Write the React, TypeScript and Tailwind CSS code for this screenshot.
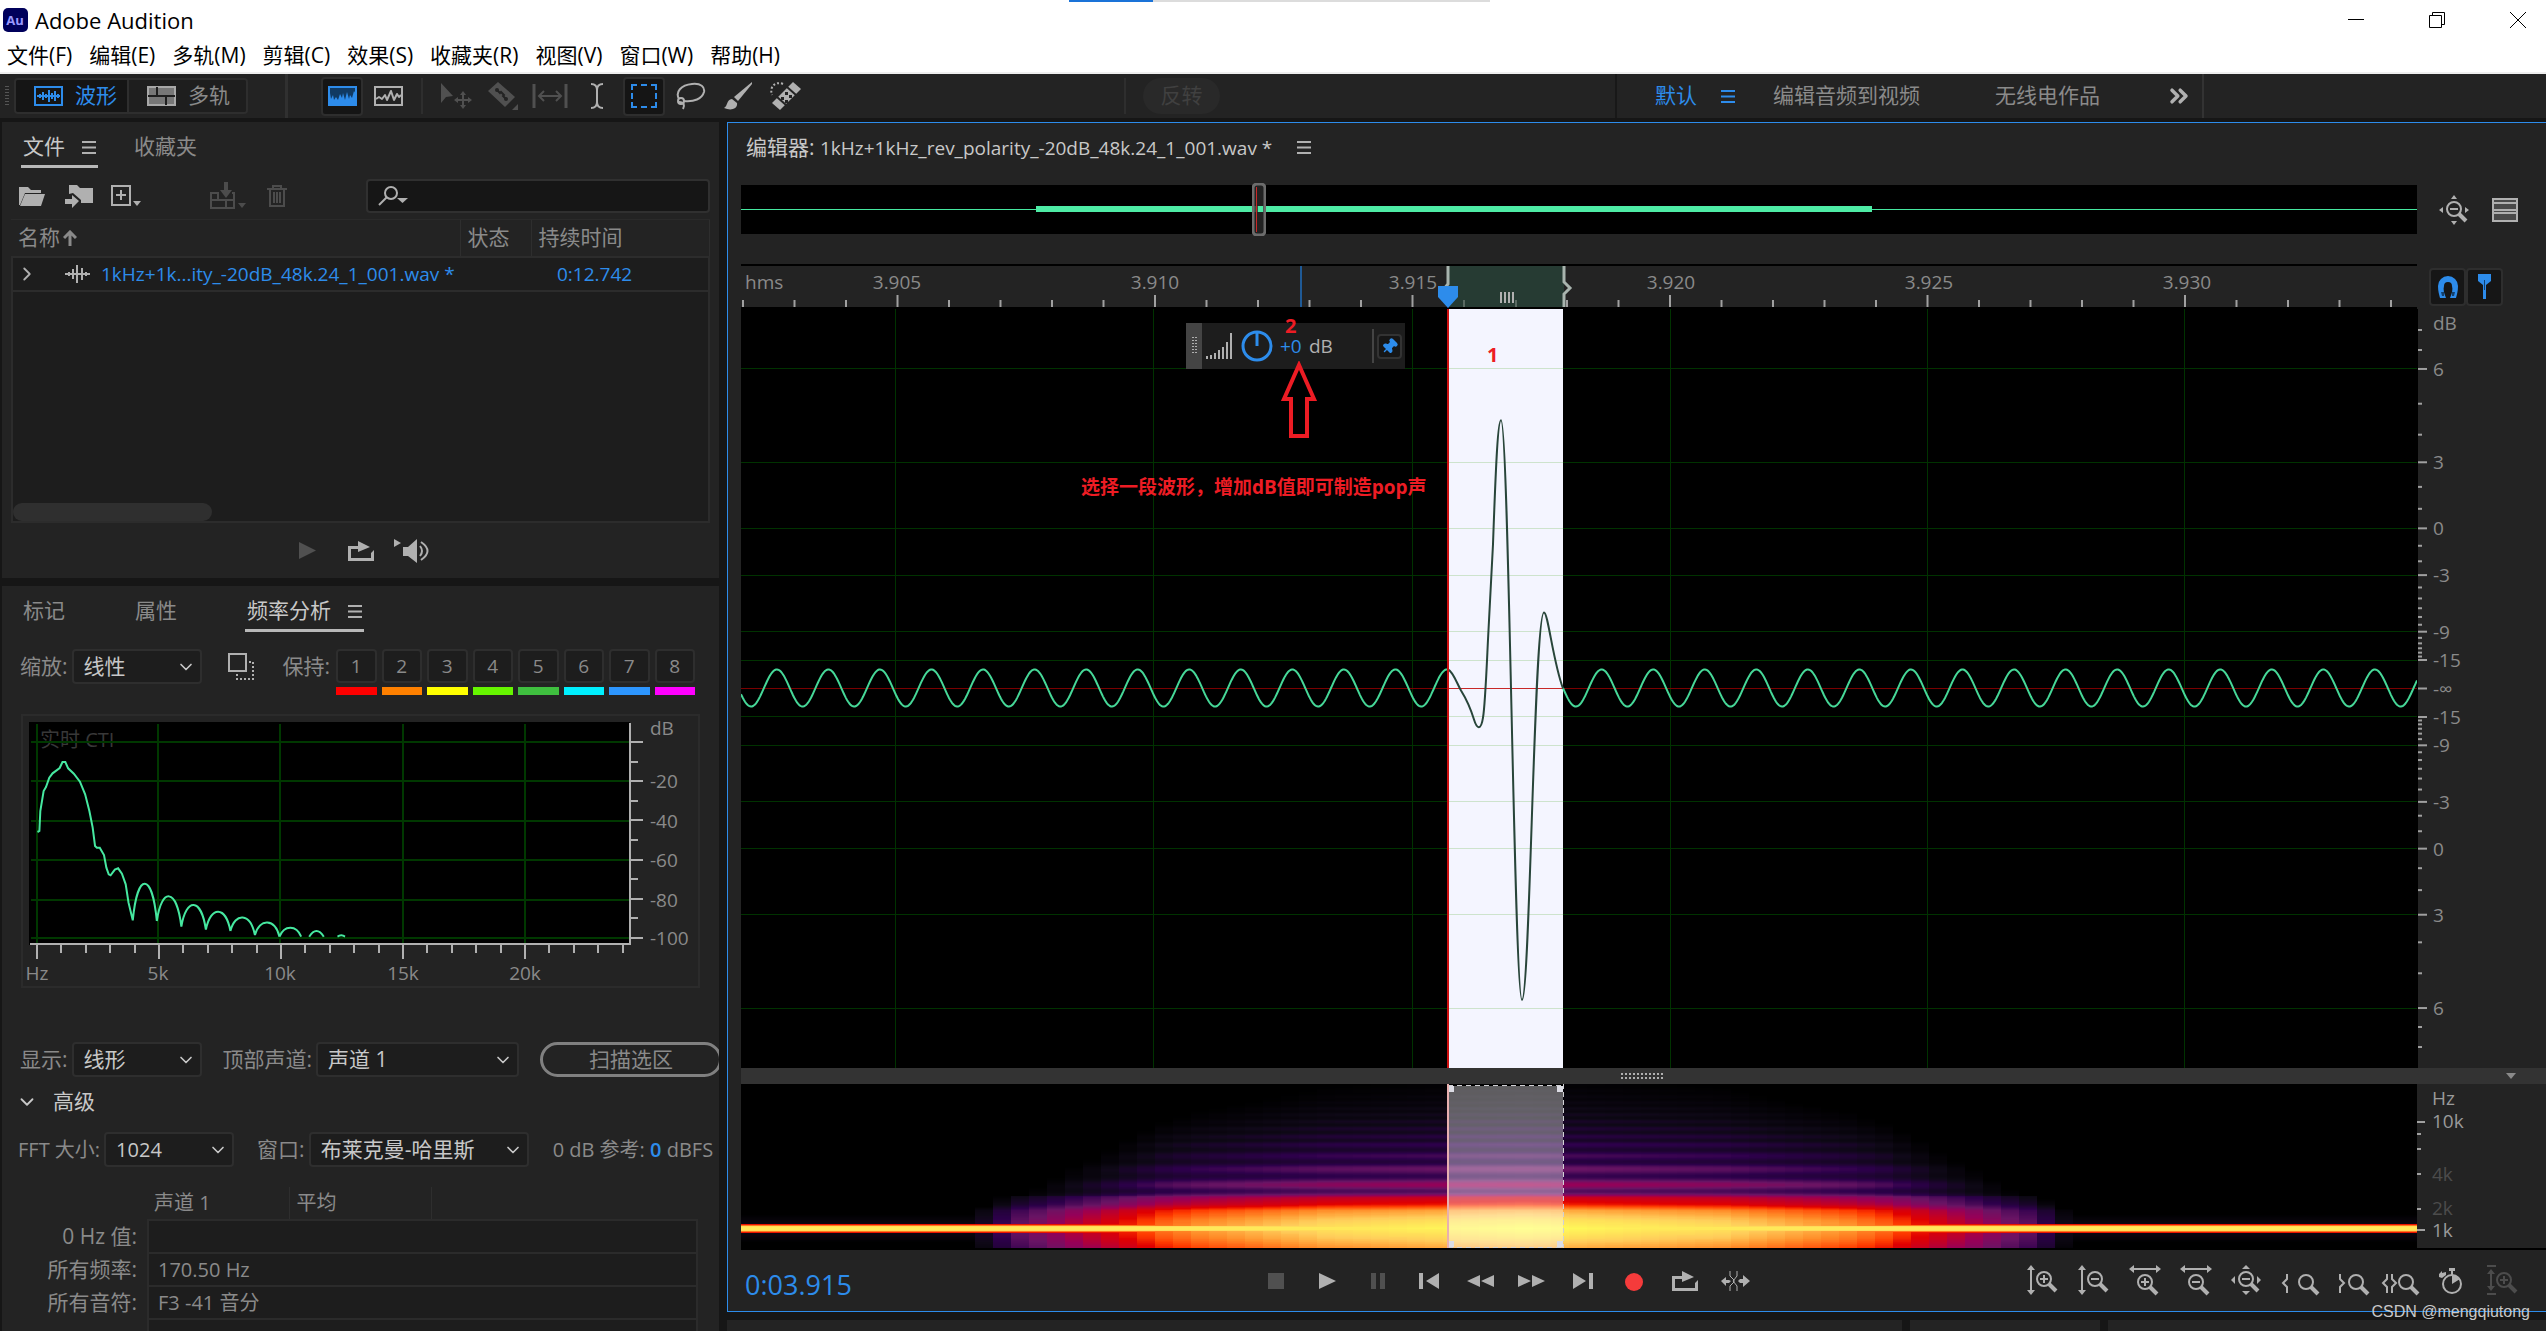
import { useEffect, useRef } from 'react';
import type { ReactNode } from 'react';
import { ChevronDown, ChevronRight, ChevronsRight, Pin } from 'lucide-react';

const WAVE_W = 1676;
const WAVE_H = 758;

// x position inside the editor canvas as a percentage
const px = (x: number) => `${(x / WAVE_W) * 100}%`;

const menus = ['文件(F)', '编辑(E)', '多轨(M)', '剪辑(C)', '效果(S)', '收藏夹(R)', '视图(V)', '窗口(W)', '帮助(H)'];

const holds = [
  { n: 1, color: 'bg-[#ff0000]' },
  { n: 2, color: 'bg-[#ff8000]' },
  { n: 3, color: 'bg-[#ffff00]' },
  { n: 4, color: 'bg-[#66f500]' },
  { n: 5, color: 'bg-[#3fbf3f]' },
  { n: 6, color: 'bg-[#00f0ff]' },
  { n: 7, color: 'bg-[#2d96ff]' },
  { n: 8, color: 'bg-[#ff00ff]' },
];

const times = ['3.905', '3.910', '3.915', '3.920', '3.925', '3.930'];

const majorDb = [6, 3, 0, -3, -9, -15];
const minorDb = [7, 6.5, 5, 4, 2, 1, -1, -2, -4, -5, -6, -7, -8, -10, -11, -12, -13, -14];

// distance from the centre line for a level, in percent of the canvas height
const dbOffset = (db: number) => 21.1 * Math.pow(10, db / 20);

function Lines({ className = 'text-[#b0b0b0]' }: { className?: string }) {
  return (
    <svg width="14" height="13" className={className} stroke="currentColor" strokeWidth="2">
      <path d="M0 1H14M0 6.5H14M0 12H14" />
    </svg>
  );
}

/* ---------- title + menu ---------- */

function TitleBar() {
  return (
    <header className="relative bg-white text-black">
      <div className="absolute top-0 left-[42%] flex h-[2px] w-[421px] bg-[#dcdcdc]">
        <div className="w-[84px] bg-[#1a73d8]" />
      </div>
      <div className="flex h-10 items-center pl-[3px]">
        <svg width="25" height="24" viewBox="0 0 25 24">
          <rect width="25" height="24" rx="5" fill="#00005b" />
          <text x="12" y="17" textAnchor="middle" fontSize="13" fontWeight="700" fill="#9999ff">
            Au
          </text>
        </svg>
        <h1 className="pl-[7px] text-[22px]">Adobe Audition</h1>
        <div className="ml-auto flex gap-[65px] pr-5 text-black">
          <button aria-label="最小化">
            <svg width="16" height="16" stroke="currentColor">
              <path d="M0 7.5H16" />
            </svg>
          </button>
          <button aria-label="还原">
            <svg width="16" height="16" fill="none" stroke="currentColor">
              <path d="M.5 3.5H12.5V15.5H.5ZM3.5 3.5V.5H15.5V12.5H12.5" />
            </svg>
          </button>
          <button aria-label="关闭">
            <svg width="16" height="16" stroke="currentColor">
              <path d="M0 0L16 16M16 0L0 16" />
            </svg>
          </button>
        </div>
      </div>
      <nav className="flex h-[34px] items-center gap-[17px] border-b-2 border-[#eeeeee] pl-[7px] text-[21px]">
        {menus.map((m) => (
          <button key={m}>{m}</button>
        ))}
      </nav>
    </header>
  );
}

/* ---------- toolbar ---------- */

function Tool({ label, active, children }: { label: string; active?: boolean; children: ReactNode }) {
  return (
    <button
      aria-label={label}
      className={
        active
          ? 'flex h-[39px] w-[42px] items-center justify-center rounded border-2 border-[#2e2e2e] bg-[#151515] text-[#2d8ceb]'
          : 'flex h-[39px] w-[42px] items-center justify-center'
      }
    >
      {children}
    </button>
  );
}

function Toolbar() {
  return (
    <div className="flex h-11 items-center bg-[#232323] pl-[5px] text-[#b0b0b0]">
      <svg width="4" height="20" stroke="#555" strokeWidth="4" strokeDasharray="1 2">
        <path d="M2 0V20" />
      </svg>
      <div className="ml-[5px] flex h-9 overflow-hidden rounded border-2 border-[#2e2e2e] text-[21px]">
        <button className="flex w-[113px] items-center gap-3 border-r-2 border-[#2e2e2e] bg-[#151515] pl-[18px] text-[#2d8ceb]">
          <svg width="29" height="20" fill="none" stroke="currentColor" strokeWidth="2">
            <rect x="1" y="1" width="27" height="18" />
            <path d="M3 10H26M6 8V12M9 6V14M12 8V12M15 4V16M18 7V13M21 5V15M24 8V12" />
          </svg>
          波形
        </button>
        <button className="flex w-[117px] items-center gap-3 bg-[#1e1e1e] pl-[18px] text-[#8a8a8a]">
          <svg width="29" height="20">
            <rect width="29" height="20" fill="#a8a8a8" />
            <path d="M2 2H9V9H2ZM2 11H18V18H2ZM11 2H27V9H11ZM20 11H27V18H20Z" fill="#777" />
            <path d="M1 10H28M10 1V10M19 10V19" stroke="#1e1e1e" strokeWidth="2" />
          </svg>
          多轨
        </button>
      </div>
      <div className="ml-[37px] h-11 w-[3px] bg-[#303030]" />

      <div className="ml-[33px] flex items-center gap-1">
        <Tool label="频谱显示" active>
          <svg width="29" height="20">
            <rect width="29" height="20" fill="#103a63" />
            <path
              d="M1 19V9L2 7L3 13L5 9L6 14L8 11L10 14L12 8L14 12L15 7L17 14L19 6L21 13L22 9L24 12L26 5L28 8V19Z"
              fill="#2d8ceb"
            />
            <rect x="1" y="1" width="27" height="18" fill="none" stroke="#2d8ceb" strokeWidth="2" />
          </svg>
        </Tool>
        <Tool label="音高显示">
          <svg width="29" height="20" fill="none" stroke="currentColor" strokeWidth="2">
            <rect x="1" y="1" width="27" height="18" />
            <path d="M2 13L5 11L8 13L11 9L13 14L17 5L20 14L23 8L25 11L27 9" strokeLinejoin="round" />
          </svg>
        </Tool>
      </div>
      <div className="ml-[12px] h-9 w-[2px] bg-[#2e2e2e]" />

      <div className="ml-[12px] flex items-center gap-[5px]">
        <Tool label="移动工具">
          <svg width="32" height="26" className="text-[#505050]" fill="currentColor">
            <path d="M1 0L13 13L6 14L1 20Z" />
            <path d="M23 8L26 12H24V16H28V14L32 17L28 20V18H24V22H26L23 26L20 22H22V18H18V20L14 17L18 14V16H22V12H20Z" />
          </svg>
        </Tool>
        <Tool label="切断所选剪辑工具">
          <svg width="32" height="30" className="text-[#505050]">
            <path d="M1 10L11 1L28 16L18 26Z" fill="currentColor" />
            <path d="M10 9L13 12L14 11L17 14L16 15L19 18" fill="none" stroke="#232323" strokeWidth="2" />
            <circle cx="10" cy="9" r="2" fill="#232323" />
            <circle cx="19" cy="18" r="2" fill="#232323" />
            <path d="M31 23V29H25Z" fill="currentColor" />
          </svg>
        </Tool>
        <Tool label="滑动工具">
          <svg width="36" height="24" className="text-[#505050]" fill="none" stroke="currentColor" strokeWidth="3">
            <path d="M2 0V24M34 0V24" />
            <path d="M8 12H28M12 7L7 12L12 17M24 7L29 12L24 17" strokeWidth="2" />
          </svg>
        </Tool>
      </div>
      <div className="ml-[5px] flex items-center gap-[5px]">
        <Tool label="时间选择工具">
          <svg width="14" height="26" fill="none" stroke="currentColor" strokeWidth="2">
            <path d="M1 1Q7 1 7 7Q7 1 13 1M7 5V21M1 25Q7 25 7 19Q7 25 13 25" />
          </svg>
        </Tool>
        <Tool label="框选工具" active>
          <svg width="26" height="24" fill="none" stroke="currentColor" strokeWidth="2">
            <path d="M1 6V1H6M20 1H25V6M25 18V23H20M6 23H1V18M10 1H16M10 23H16M1 9V15M25 9V15" />
          </svg>
        </Tool>
        <Tool label="套索选择工具">
          <svg width="30" height="28" fill="none" stroke="currentColor" strokeWidth="2">
            <path d="M3 17C-1 10 5 3 16 2C25 1 29 5 28 10C26 17 18 20 8 19" />
            <circle cx="5" cy="19" r="3" />
            <path d="M3 20C8 20 9 23 7 27" />
          </svg>
        </Tool>
        <Tool label="画笔选择工具">
          <svg width="30" height="28" fill="currentColor">
            <path d="M29 0L11 15L15 19L29 2Z" />
            <path d="M9 17C3 18 5 24 1 26C8 29 15 27 14 21Z" />
          </svg>
        </Tool>
        <Tool label="污点修复画笔工具">
          <svg width="32" height="30">
            <path d="M14 3C7 0 0 5 3 14" fill="none" stroke="currentColor" strokeWidth="2" strokeDasharray="2 2" />
            <path d="M24 1L32 8L11 29L3 22Z" fill="currentColor" />
            <path d="M18 6L27 14M8 16L17 24" stroke="#232323" strokeWidth="2" />
            <path d="M16 11h3v3h-3zM20 14h3v3h-3zM12 16h3v3h-3zM16 19h3v3h-3z" fill="#232323" />
          </svg>
        </Tool>
      </div>

      <div className="ml-auto flex h-full items-center">
        <div className="h-9 w-[2px] bg-[#2e2e2e]" />
        <button disabled className="ml-[17px] h-9 w-[77px] rounded-full bg-[#292929] text-[21px] text-[#404040]">
          反转
        </button>
      </div>
      <div className="ml-[395px] flex h-full items-center border-x-2 border-[#181818] border-r-[#333333] pr-[9px] pl-[38px] text-[21px] text-[#8a8a8a]">
        <button className="text-[#2d8ceb]">默认</button>
        <button aria-label="工作区菜单" className="ml-6">
          <Lines className="text-[#2d8ceb]" />
        </button>
        <button className="ml-[38px]">编辑音频到视频</button>
        <button className="ml-[75px]">无线电作品</button>
        <button aria-label="更多" className="ml-[65px] text-[#b0b0b0]">
          <ChevronsRight size={28} strokeWidth={3} />
        </button>
      </div>
      <div className="w-[342px]" />
    </div>
  );
}

/* ---------- files panel ---------- */

function Tab({ label, active }: { label: string; active?: boolean }) {
  return active ? (
    <button className="flex items-center gap-[17px] border-b-[3px] border-[#b8b8b8] px-[2px] pt-[7px] text-[#c8c8c8]">
      {label}
      <Lines />
    </button>
  ) : (
    <button className="border-b-[3px] border-transparent px-[2px] pt-[7px] text-[#8a8a8a]">{label}</button>
  );
}

const PlayIcon = () => (
  <svg width="17" height="17" fill="currentColor">
    <path d="M0 0L17 8.5L0 17Z" />
  </svg>
);

const LoopIcon = () => (
  <svg width="26" height="20" fill="currentColor">
    <path d="M0 5H10V0L22 6L10 11V8H3V17H23V12L26 9V20H0Z" />
  </svg>
);

function FilesPanel() {
  return (
    <section className="bg-[#232323] px-[9px] text-[#8a8a8a]">
      <div className="flex h-[46px] gap-[34px] px-[10px] text-[21px]">
        <Tab label="文件" active />
        <Tab label="收藏夹" />
      </div>
      <div className="mt-[11px] flex h-[34px] items-center pl-2 text-[#b0b0b0]">
        <button aria-label="打开文件">
          <svg width="26" height="20" fill="currentColor">
            <path d="M0 19V1H9L12 4H22V7H6L1 19Z" />
            <path d="M6 8H26L22 20H1Z" />
          </svg>
        </button>
        <button aria-label="导入文件" className="ml-5">
          <svg width="28" height="24" fill="currentColor">
            <path d="M4 10V1H12L15 4H28V19H16V16L8 9Z" />
            <path d="M0 15H7V11L14 17L7 24V20H0Z" />
          </svg>
        </button>
        <button aria-label="新建文件" className="ml-[18px]">
          <svg width="30" height="22" fill="none" stroke="currentColor" strokeWidth="2">
            <path d="M1 1H19V20H1ZM10 5V15M5 10H15" />
            <path d="M22 16H30L26 21Z" fill="currentColor" stroke="none" />
          </svg>
        </button>
        <button aria-label="插入到多轨混音中" disabled className="ml-[69px] text-[#4c4c4c]">
          <svg width="36" height="28" fill="none" stroke="currentColor" strokeWidth="2">
            <path d="M9 11H1V26H24V11H22M1 18H24M8 11V18M16 18V26" />
            <path d="M14 0H18V8H22L16 16L10 8H14Z" fill="currentColor" stroke="none" />
            <path d="M28 21H36L32 26Z" fill="currentColor" stroke="none" />
          </svg>
        </button>
        <button aria-label="删除" disabled className="ml-[21px] text-[#4c4c4c]">
          <svg width="20" height="22" fill="none" stroke="currentColor" strokeWidth="2">
            <path d="M0 4H20M6 4V1H14V4M3 4V21H17V4M7 7V18M10 7V18M13 7V18" />
          </svg>
        </button>
        <label className="ml-auto flex h-[34px] w-[344px] items-center rounded border-2 border-[#303030] bg-[#161616] pl-[10px]">
          <svg width="32" height="20" fill="none" stroke="currentColor" strokeWidth="2">
            <circle cx="13" cy="7" r="6" />
            <path d="M9 11L1 19" />
            <path d="M19 12H30L24.5 17Z" fill="currentColor" stroke="none" />
          </svg>
          <input type="search" aria-label="搜索" className="min-w-0 flex-1 bg-transparent outline-none" />
        </label>
      </div>
      <div className="mt-[6px] border-t border-[#2a2a2a]">
        <table className="w-full table-fixed border-collapse text-left">
          <colgroup>
            <col className="w-[448px]" />
            <col className="w-[71px]" />
            <col />
          </colgroup>
          <thead className="text-[21px]">
            <tr className="h-[37px]">
              <th className="pl-[6px] font-normal">
                <span className="flex items-center gap-[3px]">
                  名称
                  <svg width="14" height="16" fill="none" stroke="currentColor" strokeWidth="3">
                    <path d="M7 16V3M1 8L7 2L13 8" />
                  </svg>
                </span>
              </th>
              <th className="border-l border-[#2e2e2e] pl-[7px] font-normal">状态</th>
              <th className="border-x border-[#2e2e2e] pl-[7px] font-normal">持续时间</th>
            </tr>
          </thead>
          <tbody className="border-2 border-[#2c2c2c] bg-[#1d1d1d] text-[#2d8ceb]">
            <tr className="h-[34px] border-b-2 border-[#2c2c2c]">
              <td className="pl-[3px]">
                <span className="flex items-center">
                  <ChevronRight size={22} className="text-[#b0b0b0]" />
                  <svg width="25" height="18" stroke="#b0b0b0" strokeWidth="2" className="mr-[11px] ml-[27px]">
                    <path d="M0 9H25M4 7V11M8 4V14M12 0V18M17 3V15M21 7V11" />
                  </svg>
                  <span className="text-[19px] whitespace-nowrap">1kHz+1k...ity_-20dB_48k.24_1_001.wav *</span>
                </span>
              </td>
              <td />
              <td className="pl-[26px] text-[19px]">0:12.742</td>
            </tr>
            <tr>
              <td colSpan={3} className="h-[231px] p-0 align-bottom">
                <div className="h-[18px] w-[199px] rounded-full bg-[#2f2f2f]" />
              </td>
            </tr>
          </tbody>
        </table>
      </div>
      <div className="flex h-[55px] items-center justify-center gap-[32px] pl-2 text-[#b0b0b0]">
        <button aria-label="播放" disabled className="text-[#505050]">
          <PlayIcon />
        </button>
        <button aria-label="循环播放">
          <LoopIcon />
        </button>
        <button aria-label="自动播放" className="-ml-[12px]">
          <svg width="37" height="26" fill="currentColor">
            <path d="M0 1L7 5L0 9Z" />
            <path d="M9 9H14L23 1V25L14 18H9Z" />
            <path d="M26 8Q30 13 26 18M27 4Q40 13 27 22" fill="none" stroke="currentColor" strokeWidth="2" />
          </svg>
        </button>
      </div>
    </section>
  );
}

/* ---------- frequency analysis ---------- */

function Select({ label, value, width }: { label: string; value: string; width: string }) {
  return (
    <label className="flex shrink-0 items-center gap-[4px]">
      <span className="whitespace-nowrap">{label}</span>
      <span className={`grid items-center ${width}`}>
        <select className="col-start-1 row-start-1 h-[35px] appearance-none rounded border-2 border-[#2e2e2e] bg-[#1d1d1d] pl-[10px] text-[#c8c8c8]">
          <option>{value}</option>
        </select>
        <ChevronDown size={20} className="pointer-events-none col-start-1 row-start-1 mr-[6px] justify-self-end text-[#c8c8c8]" />
      </span>
    </label>
  );
}

// trough / peak pairs of the side lobes
const lobes = [
  [282, 1018, 303, 908],
  [333, 1020, 358, 944],
  [385, 1037, 410, 971],
  [437, 1046, 463, 992],
  [489, 1050, 515, 1008],
  [541, 1062, 567, 1024],
  [593, 1067, 618, 1040],
  [656, 1067, 672, 1050],
  [716, 1067, 724, 1062],
];
const lobeEnds = [333, 385, 437, 489, 541, 593, 639, 687, 732];

const lobePath = lobes
  .map(([x, y, , peak], i) => {
    const end = lobeEnds[i];
    const endY = i < 6 ? lobes[i + 1][1] : 1067;
    const top = peak - (y - peak) / 3;
    return `M${x} ${y}C${x + 10} ${top} ${end - 10} ${top} ${end} ${endY}`;
  })
  .join('');

function FrequencyChart() {
  const gx = [16, 137, 259, 382, 504];
  const gy = [28, 67, 107, 146, 186, 224];
  return (
    <svg viewBox="0 0 679 274" className="block w-full text-[19px]" role="img" aria-label="频率分析">
      <rect x="1" y="1" width="677" height="272" fill="none" stroke="#2b2b2b" strokeWidth="2" />
      <rect x="8" y="8" width="601" height="223" fill="#000" />
      <text x="19" y="33" fill="#383838" fontSize="20">
        实时 CTI
      </text>
      <g stroke="#003800" strokeWidth="2">
        {gx.map((x) => (
          <path key={x} d={`M${x} 10V231`} />
        ))}
        {gy.map((y) => (
          <path key={y} d={`M10 ${y}H609`} />
        ))}
      </g>
      <svg x="8" y="8" width="600" height="223" viewBox="62 423 1272 669" preserveAspectRatio="none">
        <path
          d={`M80 753L84 750L86 690L93 630L98 618L105 590L112 577L127 561L133 543L139 543L145 562L157 578L170 602L181 640L190 690L197 740L202 795L206 800H212L221 822L226 860L231 880L235 883L244 866L251 862L259 878L267 910L273 965L282 1018${lobePath}`}
          fill="none"
          stroke="#46e8a0"
          strokeWidth="2"
          vectorEffect="non-scaling-stroke"
        />
      </svg>
      <g stroke="#b0b0b0" strokeWidth="2">
        <path d="M609 9V231M9 230H610" />
        {Array.from({ length: 25 }, (_, i) => (
          <path key={i} d={`M${16 + Math.round(i * 24.4)} 231V${i % 5 === 0 ? 245 : 239}`} />
        ))}
        {Array.from({ length: 11 }, (_, i) => (
          <path key={i} d={`M610 ${28 + Math.round(i * 19.6)}H${i % 2 === 0 ? 622 : 617}`} />
        ))}
      </g>
      <g fill="#8a8a8a">
        <text x="629" y="21">
          dB
        </text>
        {['-20', '-40', '-60', '-80', '-100'].map((t, i) => (
          <text key={t} x="629" y={gy[i + 1] + 7}>
            {t}
          </text>
        ))}
        {['Hz', '5k', '10k', '15k', '20k'].map((t, i) => (
          <text key={t} x={gx[i]} y="266" textAnchor="middle">
            {t}
          </text>
        ))}
      </g>
    </svg>
  );
}

function FrequencyPanel() {
  return (
    <section className="min-h-0 flex-1 overflow-hidden bg-[#232323] text-[21px] text-[#8a8a8a]">
      <div className="flex h-[46px] gap-[66px] px-[19px]">
        <Tab label="标记" />
        <Tab label="属性" />
        <Tab label="频率分析" active />
      </div>
      <div className="mt-[17px] flex items-start pl-[18px] whitespace-nowrap">
        <Select label="缩放:" value="线性" width="w-[130px]" />
        <button aria-label="复制到" className="mt-1 ml-[26px]">
          <svg width="26" height="27" fill="none" stroke="#b0b0b0" strokeWidth="2">
            <rect x="1" y="1" width="17" height="17" />
            <path d="M21 9H25V26H9V21" strokeDasharray="2 2" />
          </svg>
        </button>
        <div className="ml-auto flex items-start gap-[6px] pr-[24px]">
          <span className="pt-[2px]">保持:</span>
          <div className="grid w-[359px] grid-cols-8 gap-[5px]">
            {holds.map((h) => (
              <div key={h.n} className="flex flex-col gap-1">
                <button className="h-[34px] rounded border-2 border-[#2e2e2e] bg-[#1d1d1d] text-[19px] leading-none">{h.n}</button>
                <div className={`h-2 ${h.color}`} />
              </div>
            ))}
          </div>
        </div>
      </div>
      <div className="mt-[19px] px-[19px]">
        <FrequencyChart />
      </div>
      <div className="mt-[54px] flex items-center pl-[18px] whitespace-nowrap">
        <Select label="显示:" value="线形" width="w-[130px]" />
        <div className="ml-[21px]">
          <Select label="顶部声道:" value="声道 1" width="w-[203px]" />
        </div>
        <button className="ml-[21px] h-[35px] w-[182px] shrink-0 rounded-full border-[3px] border-[#808080] leading-none">扫描选区</button>
      </div>
      <button className="mt-[9px] flex h-8 items-center gap-[15px] pl-[14px] text-[#c8c8c8]">
        <ChevronDown size={22} />
        高级
      </button>
      <div className="mt-[14px] flex items-center pl-[16px] whitespace-nowrap">
        <div className="text-[20px]">
          <Select label="FFT 大小:" value="1024" width="w-[130px]" />
        </div>
        <div className="ml-[23px]">
          <Select label="窗口:" value="布莱克曼-哈里斯" width="w-[220px]" />
        </div>
        <span className="ml-[24px] text-[20px]">
          0 dB 参考: <span className="font-semibold text-[#2d8ceb]">0</span> dBFS
        </span>
      </div>
      <table className="mt-[20px] w-[696px] table-fixed border-collapse text-left text-[20px]">
        <colgroup>
          <col className="w-[146px]" />
          <col className="w-[141px]" />
          <col className="w-[142px]" />
          <col />
        </colgroup>
        <thead>
          <tr className="h-[33px]">
            <td />
            <th className="pl-[6px] font-normal">声道 1</th>
            <th className="border-x border-[#2e2e2e] pl-[7px] font-normal">平均</th>
            <td />
          </tr>
        </thead>
        <tbody>
          {[
            ['0 Hz 值:', ''],
            ['所有频率:', '170.50 Hz'],
            ['所有音符:', 'F3 -41 音分'],
            ['', ''],
          ].map(([k, v], i) => (
            <tr key={i} className="h-[33px]">
              <th className="p-0 pr-[10px] text-right text-[21px] leading-none font-normal">{k}</th>
              <td colSpan={3} className="border-2 border-[#2b2b2b] bg-[#1d1d1d] p-0 pl-[9px] leading-none">
                {v}
              </td>
            </tr>
          ))}
        </tbody>
      </table>
    </section>
  );
}

/* ---------- editor ---------- */

function Overview() {
  return (
    <div className="flex">
      <svg className="h-[49px] flex-1 overflow-visible bg-black">
        <line x1="0" x2="100%" y1="24" y2="24" stroke="#46e8a0" strokeWidth="1" shapeRendering="crispEdges" />
        <rect x={px(295)} y="21" width={px(836)} height="6" fill="#4eeba5" />
        <svg x={px(511)} y="-2" width="14" height="53">
          <rect x="1" y="1" width="12" height="51" rx="4" fill="#2a2a2a" fillOpacity="0.8" stroke="#6c6c6c" strokeWidth="3" />
          <path d="M6 23H11V29H6Z" fill="#4eeba5" />
          <path d="M4.5 4V49" stroke="#c82828" strokeWidth="1" />
        </svg>
      </svg>
      <div className="flex w-[129px] items-center gap-[23px] pl-[22px] text-[#b0b0b0]">
        <button aria-label="全部缩小">
          <svg width="30" height="30" fill="currentColor">
            <path d="M15 0L18 4H12ZM15 30L18 26H12ZM0 15L4 12V18ZM30 15L26 12V18Z" />
            <Glass cx={15} cy={14} sign="-" />
          </svg>
        </button>
        <button aria-label="显示列表">
          <svg width="26" height="24" fill="none" stroke="currentColor" strokeWidth="2">
            <rect x="1" y="1" width="24" height="22" fill="#4a4a4a" />
            <path d="M1 5H25M1 12H25M1 15H25" />
          </svg>
        </button>
      </div>
    </div>
  );
}

function Ruler() {
  const ticks = Array.from({ length: 33 }, (_, i) => i);
  return (
    <div className="mt-[30px] flex">
      <svg className="h-[45px] flex-1 overflow-visible border-y-2 border-black text-[19px]">
        <text x="4" y="23" fill="#8a8a8a">
          hms
        </text>
        {times.map((t, i) => (
          <text key={t} x={px(156 + i * 258)} y="23" textAnchor="middle" fill="#8a8a8a">
            {t}
          </text>
        ))}
        <g stroke="#a0a0a0" strokeWidth="2">
          {ticks.map((i) => (
            <line key={i} x1={px(2 + i * 51.5)} x2={px(2 + i * 51.5)} y1={i % 5 === 3 ? 29 : 34} y2="41" />
          ))}
        </g>
        <line x1={px(560)} x2={px(560)} y1="0" y2="41" stroke="#1f5a96" strokeWidth="2" />
        <rect x={px(707)} y="0" width={px(116)} height="41" fill="#263b33" />
        <svg x={px(697)} y="0" width="136" height="42" className="overflow-visible">
          <path d="M10 0V18L6 23M126 0V16L132 22L126 28V41" fill="none" stroke="#a8b4ae" strokeWidth="3" />
          <path d="M63 26V37M67 26V37M71 26V37M75 26V37" stroke="#b0b0b0" strokeWidth="2" />
          <path d="M26 34V41M78 34V41" stroke="#5a6a62" strokeWidth="2" />
          <path d="M0 20H20V31L10 42L0 31Z" fill="#2d8ceb" />
        </svg>
      </svg>
      <div className="flex w-[129px] items-center pl-3 text-[#2d8ceb]">
        <button aria-label="对齐" className="flex h-[38px] w-[37px] items-center justify-center rounded border-2 border-[#2e2e2e] bg-[#161616]">
          <svg width="22" height="22">
            <path d="M1 10A10 10 0 0 1 21 10C21 15 20 18 19 22H13C15 17 16 14 15 10A4 4 0 0 0 7 10C6 14 7 17 9 22H3C2 18 1 15 1 10Z" fill="currentColor" />
            <path d="M4 16H7V20H5ZM15 16H18L17 20H15Z" fill="#12406e" />
          </svg>
        </button>
        <button aria-label="播放指示器" className="flex h-[38px] w-[37px] items-center justify-center rounded border-2 border-[#2e2e2e] bg-[#161616]">
          <svg width="13" height="25" fill="currentColor">
            <path d="M0 0H13V7L8 11V25H5V11L0 7Z" />
            <path d="M6.5 6V16" stroke="#12406e" strokeWidth="1" />
          </svg>
        </button>
      </div>
    </div>
  );
}

// 1 kHz tone, one cycle per millisecond
function tone(from: number, to: number) {
  const pts: string[] = [];
  for (let x = from; x <= to; x += 1) {
    const y = 378.5 - 18.5 * Math.cos((2 * Math.PI * (x - 706)) / 51.55);
    pts.push(`${x} ${y.toFixed(1)}`);
  }
  return `M${pts.join('L')}`;
}

function Waveform() {
  const gridX = [154, 412, 671, 929, 1186, 1443];
  const levels = majorDb.flatMap((db) => [50 - dbOffset(db), 50 + dbOffset(db)]);
  return (
    <svg className="absolute inset-0 h-full w-full bg-black">
      <rect x={px(707)} y="0" width={px(115)} height="100%" fill="#f4f5ff" />
      <g stroke="#003200" strokeWidth="1" shapeRendering="crispEdges">
        {gridX.map((x) => (
          <line key={x} x1={px(x)} x2={px(x)} y1="0" y2="100%" />
        ))}
        {levels.map((y) => (
          <g key={y}>
            <line x1="0" x2={px(707)} y1={`${y}%`} y2={`${y}%`} />
            <line x1={px(707)} x2={px(822)} y1={`${y}%`} y2={`${y}%`} stroke="#cde3cd" />
            <line x1={px(822)} x2="100%" y1={`${y}%`} y2={`${y}%`} />
          </g>
        ))}
      </g>
      <line x1="0" x2="100%" y1="50%" y2="50%" stroke="#7a0000" shapeRendering="crispEdges" />
      <line x1={px(707)} x2={px(822)} y1="50%" y2="50%" stroke="#c82828" shapeRendering="crispEdges" />
      <svg viewBox={`0 0 ${WAVE_W} ${WAVE_H}`} preserveAspectRatio="none" width="100%" height="100%">
        <g fill="none" strokeWidth="2">
          <path d={tone(0, 707)} stroke="#46d898" vectorEffect="non-scaling-stroke" />
          <path d={tone(822, WAVE_W)} stroke="#46d898" vectorEffect="non-scaling-stroke" />
          <path
            d="M707 360C712 362 716 374 720 381C725 389 729 397 733 410C736 420 740 421 742 408C744 397 745 372 747 330L752 235C755 150 757 111 760 111C768 111 773 690 781 690C789 690 793 303 803 303C807 303 812 352 822 379"
            stroke="#28453a"
            vectorEffect="non-scaling-stroke"
          />
        </g>
      </svg>
      <line x1={px(707)} x2={px(707)} y1="0" y2="100%" stroke="#d01010" strokeWidth="2" />
    </svg>
  );
}

function Hud() {
  return (
    <div className="absolute top-[14px] left-[445px] flex h-[46px] w-[219px] items-center bg-[#1d1d1d] text-[19px]">
      <div className="flex h-full w-4 items-center justify-center bg-[#444444]">
        <svg width="5" height="18" stroke="#b0b0b0" strokeWidth="2" strokeDasharray="1 2">
          <path d="M1 0V18M4 0V18" />
        </svg>
      </div>
      <svg width="28" height="26" stroke="#b0b0b0" strokeWidth="2" className="ml-1">
        <path d="M1 23V26M5 22V26M9 20V26M13 17V26M17 14V26M21 9V26M25 0V26" />
      </svg>
      <svg width="32" height="32" className="ml-[7px]" fill="none" stroke="#2d8ceb" strokeWidth="3">
        <circle cx="16" cy="16" r="14" />
        <path d="M16 2V16" />
      </svg>
      <label className="ml-[7px] flex gap-[5px] text-[#b0b0b0]">
        <input aria-label="音量" defaultValue="+0" className="w-[24px] bg-transparent text-[#2d8ceb] outline-none" />
        dB
      </label>
      <div className="ml-auto h-[34px] w-[2px] bg-[#444444]" />
      <button aria-label="固定" className="mx-[3px] flex h-[25px] w-[25px] items-center justify-center rounded border-2 border-[#333333] bg-[#161616]">
        <Pin size={17} className="rotate-45 text-[#2d8ceb]" fill="currentColor" />
      </button>
    </div>
  );
}

function Notes() {
  return (
    <div className="pointer-events-none absolute inset-0 leading-none font-bold text-[#ed1c24]">
      <span className="absolute top-[7px] left-[544px] text-[20px]">2</span>
      <span className="absolute top-[36px] left-[746px] text-[20px]">1</span>
      <svg width="38" height="78" className="absolute top-[52px] left-[539px]" fill="none" stroke="currentColor" strokeWidth="4">
        <path d="M19 4L34 38H27V75H11V38H4Z" />
      </svg>
      <span className="absolute top-[169px] left-[340px] text-[19px] whitespace-nowrap">选择一段波形，增加dB值即可制造pop声</span>
    </div>
  );
}

function DbScale() {
  return (
    <svg className="absolute inset-0 h-full w-full text-[19px]" fill="#8a8a8a">
      <text x="15" y="21">
        dB
      </text>
      <line x1="0" x2="9" y1="50%" y2="50%" stroke="#a0a0a0" strokeWidth="2" />
      <text x="15" y="50%" dy="7">
        -∞
      </text>
      {[1, -1].map((side) => (
        <g key={side} stroke="#a0a0a0" strokeWidth="2">
          {majorDb.map((db) => (
            <g key={db}>
              <line x1="0" x2="9" y1={`${50 - side * dbOffset(db)}%`} y2={`${50 - side * dbOffset(db)}%`} />
              <text x="15" y={`${50 - side * dbOffset(db)}%`} dy="7" stroke="none">
                {db}
              </text>
            </g>
          ))}
          {minorDb.map((db) => (
            <line key={db} x1="0" x2="4" y1={`${50 - side * dbOffset(db)}%`} y2={`${50 - side * dbOffset(db)}%`} />
          ))}
        </g>
      ))}
    </svg>
  );
}

/* ---------- spectrogram ---------- */

type Stop = [number, number];

function lerp(table: Stop[], v: number) {
  if (v <= table[0][0]) return table[0][1];
  for (let i = 1; i < table.length; i++) {
    const [x0, y0] = table[i - 1];
    const [x1, y1] = table[i];
    if (v <= x1) return y0 + ((y1 - y0) * (v - x0)) / (x1 - x0);
  }
  return table[table.length - 1][1];
}

const palette: [number, number, number, number][] = [
  [0, 0, 0, 0],
  [0.12, 14, 8, 22],
  [0.3, 45, 0, 75],
  [0.45, 105, 20, 100],
  [0.56, 150, 0, 88],
  [0.66, 200, 0, 30],
  [0.72, 224, 0, 0],
  [0.78, 255, 60, 0],
  [0.86, 255, 140, 40],
  [0.93, 255, 205, 90],
  [1, 255, 255, 88],
];

const channel = (v: number, c: 1 | 2 | 3) => lerp(palette.map((p): Stop => [p[0], p[c]]), v);

const envelope: Stop[] = [
  [0, 0.04], [17, 0.1], [37, 0.19], [60, 0.32], [71, 0.37], [84, 0.46], [100, 0.57],
  [114, 0.69], [120, 0.76], [126, 0.9], [136, 0.97], [144, 1], [154, 0.96], [164, 0.9],
];

const falloff: Stop[] = [
  [0, 0], [200, 0.04], [326, 0.12], [360, 0.16], [400, 0.25], [450, 0.38], [510, 0.58], [535, 0.78], [555, 1],
];

// rows where a side lobe is brightest
const bands = [0, 6, 12, 18, 24, 30, 37, 44, 52, 60, 71, 84, 100, 114];

function ripple(y: number) {
  const i = bands.findIndex((b) => b > y);
  if (i <= 0) return 1;
  const f = (y - bands[i - 1]) / (bands[i] - bands[i - 1]);
  return 0.82 + 0.18 * Math.cos(2 * Math.PI * f);
}

function Spectrogram() {
  const ref = useRef<HTMLCanvasElement>(null);

  useEffect(() => {
    const ctx = ref.current?.getContext('2d');
    if (!ctx) return;
    const img = ctx.createImageData(WAVE_W, 164);
    const rgb = Array.from({ length: 256 }, (_, i) => [channel(i / 255, 1), channel(i / 255, 2), channel(i / 255, 3)]);
    for (let x = 0; x < WAVE_W; x++) {
      // one analysis frame is 18px wide
      const col = Math.floor(x / 18) * 18 + 9;
      const drop = lerp(falloff, Math.abs(col - 781));
      for (let y = 0; y < 164; y++) {
        const upper = y < 112 ? 1.2 : 1;
        let v = (lerp(envelope, y) - drop * upper) * ripple(y);
        const d = Math.abs(y - 144);
        if (d < 14) v = Math.max(v, 0.14 - d * 0.01);
        if (d <= 4) v = Math.max(v, [0.97, 0.97, 0.95, 0.84, 0.74][d]);
        const c = rgb[Math.max(0, Math.min(255, Math.round(v * 255)))];
        img.data.set([c[0], c[1], c[2], 255], (y * WAVE_W + x) * 4);
      }
    }
    ctx.putImageData(img, 0, 0);
  }, []);

  return (
    <div className="flex h-[166px] border-b-2 border-black">
      <div className="relative flex-1">
        <canvas ref={ref} width={WAVE_W} height={164} className="block h-full w-full" />
        <svg className="absolute inset-0 h-full w-full">
          <rect x={px(707)} y="0" width={px(115)} height="100%" fill="#ffffff" fillOpacity="0.36" />
          <line x1={px(707)} x2={px(822)} y1="1" y2="1" stroke="#000" strokeWidth="2" />
          <g stroke="#d0d0d4" strokeWidth="1" strokeDasharray="5 4" shapeRendering="crispEdges">
            <line x1={px(707)} x2={px(822)} y1="1" y2="1" />
            <line x1={px(822)} x2={px(822)} y1="0" y2="100%" strokeDasharray="5 3" />
            <line x1={px(707)} x2={px(822)} y1="163" y2="163" />
          </g>
          <line x1={px(707)} x2={px(707)} y1="0" y2="100%" stroke="#e8b0b0" strokeWidth="2" />
          <g fill="#dcdce4">
            <rect x={px(708)} y="2" width="5" height="6" />
            <rect x={px(816)} y="2" width="6" height="6" />
            <rect x={px(708)} y="157" width="5" height="6" />
            <rect x={px(816)} y="157" width="6" height="6" />
          </g>
        </svg>
      </div>
      <svg className="h-full w-[129px] text-[19px]" fill="#9a9a9a">
        <path d="M0 38H8M0 50H4M0 65H4M0 90H4M0 125H4M0 146H8" stroke="#a0a0a0" strokeWidth="2" />
        <text x="15" y="21">Hz</text>
        <text x="15" y="44">10k</text>
        <text x="15" y="97" fill="#4c4c4c">4k</text>
        <text x="15" y="131" fill="#4c4c4c">2k</text>
        <text x="15" y="153">1k</text>
      </svg>
    </div>
  );
}

/* ---------- transport ---------- */

function Glass({ cx, cy, sign }: { cx: number; cy: number; sign?: '+' | '-' }) {
  return (
    <g fill="none" stroke="currentColor" strokeWidth="2">
      <circle cx={cx} cy={cy} r="7" />
      <path d={`M${cx + 5} ${cy + 5}L${cx + 12} ${cy + 12}`} strokeWidth="4" />
      {sign && <path d={`M${cx - 4} ${cy}H${cx + 4}`} />}
      {sign === '+' && <path d={`M${cx} ${cy - 4}V${cy + 4}`} />}
    </g>
  );
}

const VArrow = () => (
  <>
    <path d="M4 4V26" stroke="currentColor" strokeWidth="2" />
    <path d="M4 0L8 5H0ZM4 30L8 25H0Z" />
  </>
);

const HArrow = () => (
  <>
    <path d="M4 4H28" stroke="currentColor" strokeWidth="2" />
    <path d="M0 4L5 0V8ZM32 4L27 0V8Z" />
  </>
);

const Bracket = ({ d }: { d: string }) => <path d={d} fill="none" stroke="currentColor" strokeWidth="2" />;

const zooms: [string, ReactNode][] = [
  ['放大振幅', <><VArrow /><Glass cx={17} cy={14} sign="+" /></>],
  ['缩小振幅', <><VArrow /><Glass cx={17} cy={14} sign="-" /></>],
  ['放大时间', <><HArrow /><Glass cx={16} cy={17} sign="+" /></>],
  ['缩小时间', <><HArrow /><Glass cx={16} cy={17} sign="-" /></>],
  ['全部缩小', <><path d="M15 0L19 4H11ZM15 30L19 26H11ZM0 15L4 11V19ZM30 15L26 11V19Z" /><Glass cx={15} cy={14} sign="-" /></>],
  ['放大入点', <><Bracket d="M5 9V14L1 18L5 22V28" /><Glass cx={24} cy={17} /></>],
  ['放大出点', <><Bracket d="M7 9V14L11 18L7 22V28" /><Glass cx={23} cy={17} /></>],
  ['缩放至选区', <><Bracket d="M3 9V14L-1 18L3 22V28M8 9V14L12 18L8 22V28" /><Glass cx={22} cy={17} /></>],
  ['定时录音', <><circle cx="17" cy="19" r="9" fill="none" stroke="currentColor" strokeWidth="2" /><path d="M17 19V10Q22 10 25 14ZM14 3H20V6H18V10H16V6H14ZM4 9L7 6V8L11 7V10L7 13L4 12Z" /></>],
];

const transport: [string, string, ReactNode][] = [
  ['停止', 'text-[#505050]', <rect x="8" y="7" width="16" height="16" />],
  ['播放', '', <path d="M8 7L25 15L8 23Z" />],
  ['暂停', 'text-[#505050]', <path d="M9 7H14V23H9ZM18 7H23V23H18Z" />],
  ['移到上一个', '', <path d="M6 7H10V23H6ZM26 7V23L13 15Z" />],
  ['快退', '', <path d="M3 15L16 9V21ZM17 15L30 9V21Z" />],
  ['快进', '', <path d="M30 15L17 9V21ZM16 15L3 9V21Z" />],
  ['移到下一个', '', <path d="M7 7L20 15L7 23ZM23 7H27V23H23Z" />],
  ['录制', 'text-[#f53b3b]', <circle cx="17" cy="16" r="9" />],
  ['循环播放', '', <path d="M4 10H14V5L26 11L14 16V13H7V22H27V17L30 14V25H4Z" />],
  [
    '跳过所选项目',
    '',
    <>
      <path d="M2 15L7 11V14H10L12 15L10 17H7V20ZM31 15L24 9V13H21L19 15L21 17H24V21Z" />
      <path d="M11 5V10L15 14V16L11 20V25M18 5V10L14 15L18 20V25" fill="none" stroke="currentColor" strokeWidth="1" />
    </>,
  ],
];

function Transport() {
  return (
    <div className="flex h-[61px] items-center text-[#b0b0b0]">
      <output className="flex-[528] pt-[10px] pl-1 text-[27px] text-[#2d8ceb]">0:03.915</output>
      <div className="flex gap-[19px]">
        {transport.map(([label, color, shape]) => (
          <button key={label} aria-label={label} className={color}>
            <svg width="32" height="30" fill="currentColor">
              {shape}
            </svg>
          </button>
        ))}
      </div>
      <div className="flex flex-[786] justify-end gap-[19px] pr-7">
        {zooms.map(([label, shape]) => (
          <button key={label} aria-label={label}>
            <svg width="32" height="31" fill="currentColor" className="overflow-visible">
              {shape}
            </svg>
          </button>
        ))}
        <button aria-label="重置缩放" disabled className="text-[#4c4c4c]">
          <svg width="32" height="31" fill="currentColor" className="overflow-visible">
            <path d="M1 1H10M1 29H10M5 6V24" stroke="currentColor" strokeWidth="2" />
            <path d="M5 4L9 9H1ZM5 26L9 21H1Z" />
            <Glass cx={18} cy={15} sign="+" />
          </svg>
        </button>
      </div>
    </div>
  );
}

function Editor() {
  return (
    <section className="flex min-h-0 flex-1 flex-col border-y border-l border-[#2d8ceb] bg-[#232323] pl-[13px]">
      <div className="flex h-[62px] items-center gap-[25px] pb-[13px] pl-[5px] text-[#c8c8c8]">
        <h2 className="text-[19px]">
          <span className="text-[21px]">编辑器: </span>1kHz+1kHz_rev_polarity_-20dB_48k.24_1_001.wav *
        </h2>
        <button aria-label="编辑器菜单">
          <Lines />
        </button>
      </div>
      <Overview />
      <Ruler />
      <div className="flex min-h-[400px] flex-1">
        <div className="relative flex-1 overflow-hidden">
          <Waveform />
          <Hud />
          <Notes />
        </div>
        <div className="relative w-[129px] border-l border-black">
          <DbScale />
        </div>
      </div>
      <div className="flex h-4 items-center bg-[#333333]">
        <div className="flex-[880]" />
        <svg width="42" height="6" stroke="#b0b0b0" strokeWidth="2" strokeDasharray="2 2">
          <path d="M0 1H42M0 5H42" />
        </svg>
        <div className="flex-[843]" />
        <svg width="40" height="6" fill="#8a8a8a">
          <path d="M0 0H10L5 6Z" />
        </svg>
      </div>
      <Spectrogram />
      <Transport />
    </section>
  );
}

export default function App() {
  return (
    <div className="relative flex h-screen flex-col overflow-hidden bg-[#161616] font-['Open_Sans','Noto_Sans_CJK_SC',sans-serif]">
      <TitleBar />
      <Toolbar />
      <main className="grid min-h-0 flex-1 grid-cols-[717fr_1819fr] gap-2 pt-1 pl-[2px]">
        <div className="flex min-h-0 min-w-0 flex-col gap-2">
          <FilesPanel />
          <FrequencyPanel />
        </div>
        <div className="flex min-h-0 min-w-0 flex-col">
          <Editor />
          <div className="mt-2 flex h-[11px] gap-2">
            <div className="flex-[1175] bg-[#232323]" />
            <div className="flex-[190] bg-[#232323]" />
            <div className="flex-[438] bg-[#232323]" />
          </div>
        </div>
      </main>
      <span className="absolute right-4 bottom-[7px] font-['Liberation_Sans',sans-serif] text-[16px] text-[#c8c8c8]">CSDN @mengqiutong</span>
    </div>
  );
}
